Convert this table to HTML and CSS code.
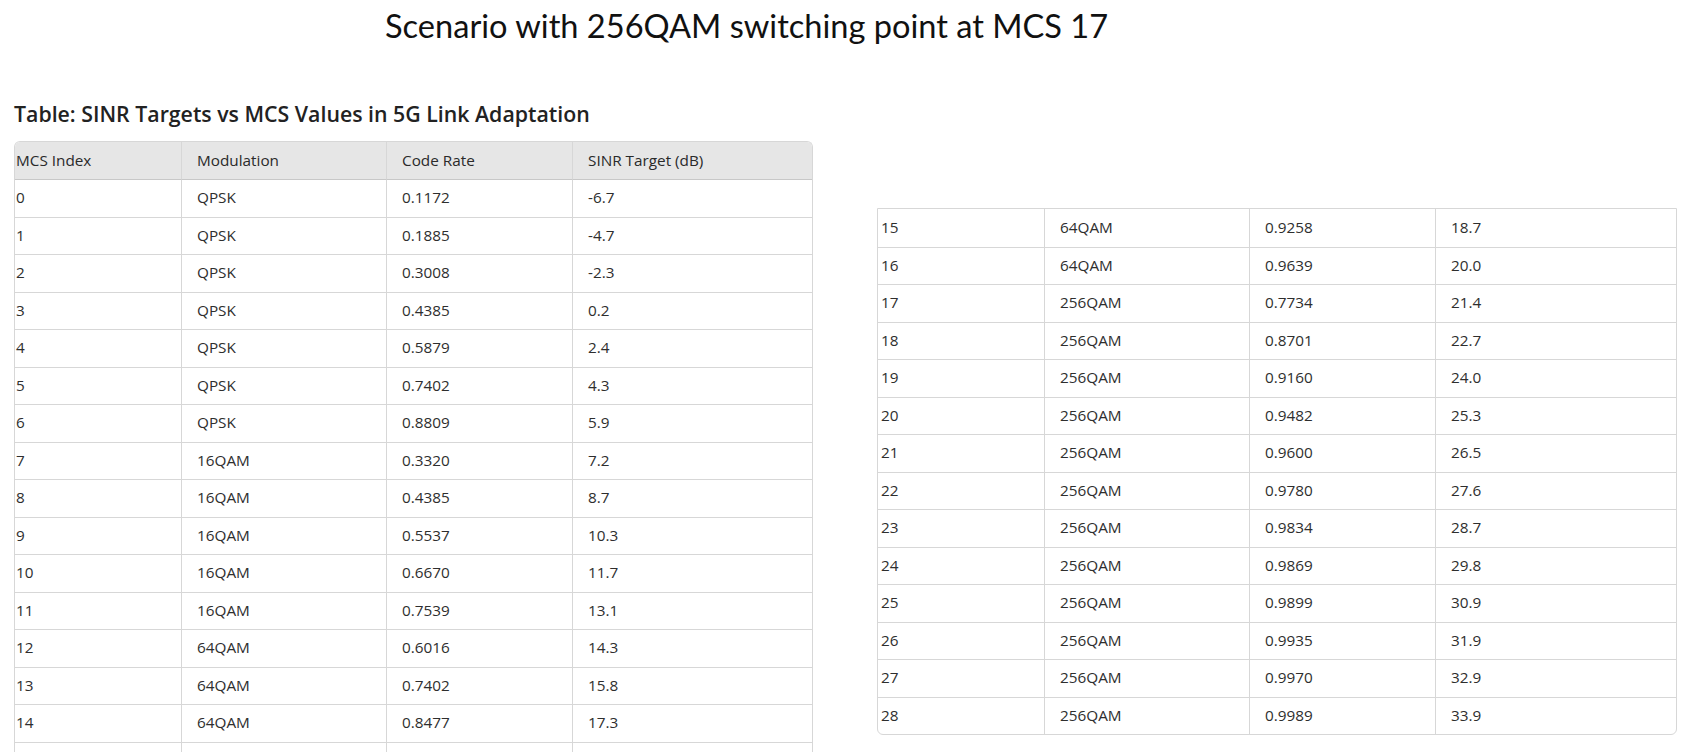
FILE: index.html
```html
<!DOCTYPE html>
<html lang="en">
<head>
<meta charset="utf-8">
<title>SINR Targets vs MCS Values</title>
<link rel="stylesheet" href="styles.css">
</head>
<body>
<h1 class="slide-title">Scenario with 256QAM switching point at MCS 17</h1>
<div class="content">
  <section class="left">
    <h2 class="table-title">Table: SINR Targets vs MCS Values in 5G Link Adaptation</h2>
    <table class="mcs mcs-top">
      <colgroup><col class="c1"><col class="c2"><col class="c3"><col class="c4"></colgroup>
      <thead>
        <tr><th>MCS Index</th><th>Modulation</th><th>Code Rate</th><th>SINR Target (dB)</th></tr>
      </thead>
      <tbody>
        <tr><td>0</td><td>QPSK</td><td>0.1172</td><td>-6.7</td></tr>
        <tr><td>1</td><td>QPSK</td><td>0.1885</td><td>-4.7</td></tr>
        <tr><td>2</td><td>QPSK</td><td>0.3008</td><td>-2.3</td></tr>
        <tr><td>3</td><td>QPSK</td><td>0.4385</td><td>0.2</td></tr>
        <tr><td>4</td><td>QPSK</td><td>0.5879</td><td>2.4</td></tr>
        <tr><td>5</td><td>QPSK</td><td>0.7402</td><td>4.3</td></tr>
        <tr><td>6</td><td>QPSK</td><td>0.8809</td><td>5.9</td></tr>
        <tr><td>7</td><td>16QAM</td><td>0.3320</td><td>7.2</td></tr>
        <tr><td>8</td><td>16QAM</td><td>0.4385</td><td>8.7</td></tr>
        <tr><td>9</td><td>16QAM</td><td>0.5537</td><td>10.3</td></tr>
        <tr><td>10</td><td>16QAM</td><td>0.6670</td><td>11.7</td></tr>
        <tr><td>11</td><td>16QAM</td><td>0.7539</td><td>13.1</td></tr>
        <tr><td>12</td><td>64QAM</td><td>0.6016</td><td>14.3</td></tr>
        <tr><td>13</td><td>64QAM</td><td>0.7402</td><td>15.8</td></tr>
        <tr><td>14</td><td>64QAM</td><td>0.8477</td><td>17.3</td></tr>
        <tr><td></td><td></td><td></td><td></td></tr>
      </tbody>
    </table>
  </section>
  <section class="right">
    <table class="mcs mcs-bottom">
      <colgroup><col class="c1"><col class="c2"><col class="c3"><col class="c4"></colgroup>
      <tbody>
        <tr><td>15</td><td>64QAM</td><td>0.9258</td><td>18.7</td></tr>
        <tr><td>16</td><td>64QAM</td><td>0.9639</td><td>20.0</td></tr>
        <tr><td>17</td><td>256QAM</td><td>0.7734</td><td>21.4</td></tr>
        <tr><td>18</td><td>256QAM</td><td>0.8701</td><td>22.7</td></tr>
        <tr><td>19</td><td>256QAM</td><td>0.9160</td><td>24.0</td></tr>
        <tr><td>20</td><td>256QAM</td><td>0.9482</td><td>25.3</td></tr>
        <tr><td>21</td><td>256QAM</td><td>0.9600</td><td>26.5</td></tr>
        <tr><td>22</td><td>256QAM</td><td>0.9780</td><td>27.6</td></tr>
        <tr><td>23</td><td>256QAM</td><td>0.9834</td><td>28.7</td></tr>
        <tr><td>24</td><td>256QAM</td><td>0.9869</td><td>29.8</td></tr>
        <tr><td>25</td><td>256QAM</td><td>0.9899</td><td>30.9</td></tr>
        <tr><td>26</td><td>256QAM</td><td>0.9935</td><td>31.9</td></tr>
        <tr><td>27</td><td>256QAM</td><td>0.9970</td><td>32.9</td></tr>
        <tr><td>28</td><td>256QAM</td><td>0.9989</td><td>33.9</td></tr>
      </tbody>
    </table>
  </section>
</div>
</body>
</html>
```

FILE: styles.css
```css
html, body {
  margin: 0;
  padding: 0;
  background: #ffffff;
  overflow: hidden;
}
body {
  width: 1686px;
  height: 752px;
  font-family: "Open Sans", "Liberation Sans", sans-serif;
  color: #2e2e2e;
}
.slide-title {
  margin: 0;
  height: 100px;
  box-sizing: border-box;
  padding: 6px 0 0 385px;
  font-family: Lato, "Open Sans", sans-serif;
  font-weight: 400;
  font-size: 32.6px;
  line-height: 40px;
  color: #111;
}
.content {
  display: flex;
  align-items: flex-start;
  gap: 64px;
  padding-left: 14px;
}
.table-title {
  margin: 0 0 13px 0;
  font-size: 21.3px;
  line-height: 28px;
  font-weight: 600;
  color: #222;
  white-space: nowrap;
}
.right {
  margin-top: 108px;
}
.mcs {
  border-collapse: separate;
  border-spacing: 0;
  table-layout: fixed;
  width: 800px;
  font-size: 15.3px;
  border: 1px solid #d7d7d7;
}
.mcs-top {
  width: 799px;
  border-radius: 6px 6px 0 0;
  border-bottom: none;
}
.mcs-bottom {
  border-radius: 0 0 6px 6px;
}
.mcs .c1 { width: 166px; }
.mcs .c2 { width: 205px; }
.mcs .c3 { width: 186px; }
.mcs .c4 { width: auto; }
.mcs th, .mcs td {
  box-sizing: border-box;
  height: 37.5px;
  padding: 0 4px 2px 15px;
  text-align: left;
  font-weight: 400;
  white-space: nowrap;
  border-left: 1px solid #d7d7d7;
  border-top: 1px solid #d7d7d7;
}
.mcs th:first-child, .mcs td:first-child {
  border-left: none;
  padding-left: 1px;
}
.mcs-bottom td:first-child {
  padding-left: 3px;
}
.mcs tbody tr:first-child td {
  border-top: none;
}
.mcs-top tbody tr:first-child td {
  border-top: 1px solid #c8c8c8;
}
.mcs thead th {
  height: 37px;
  background: #e6e6e6;
  color: #2a2a2a;
  border-top: none;
}
.mcs thead th:first-child { border-top-left-radius: 5px; }
.mcs thead th:last-child { border-top-right-radius: 5px; }
```
